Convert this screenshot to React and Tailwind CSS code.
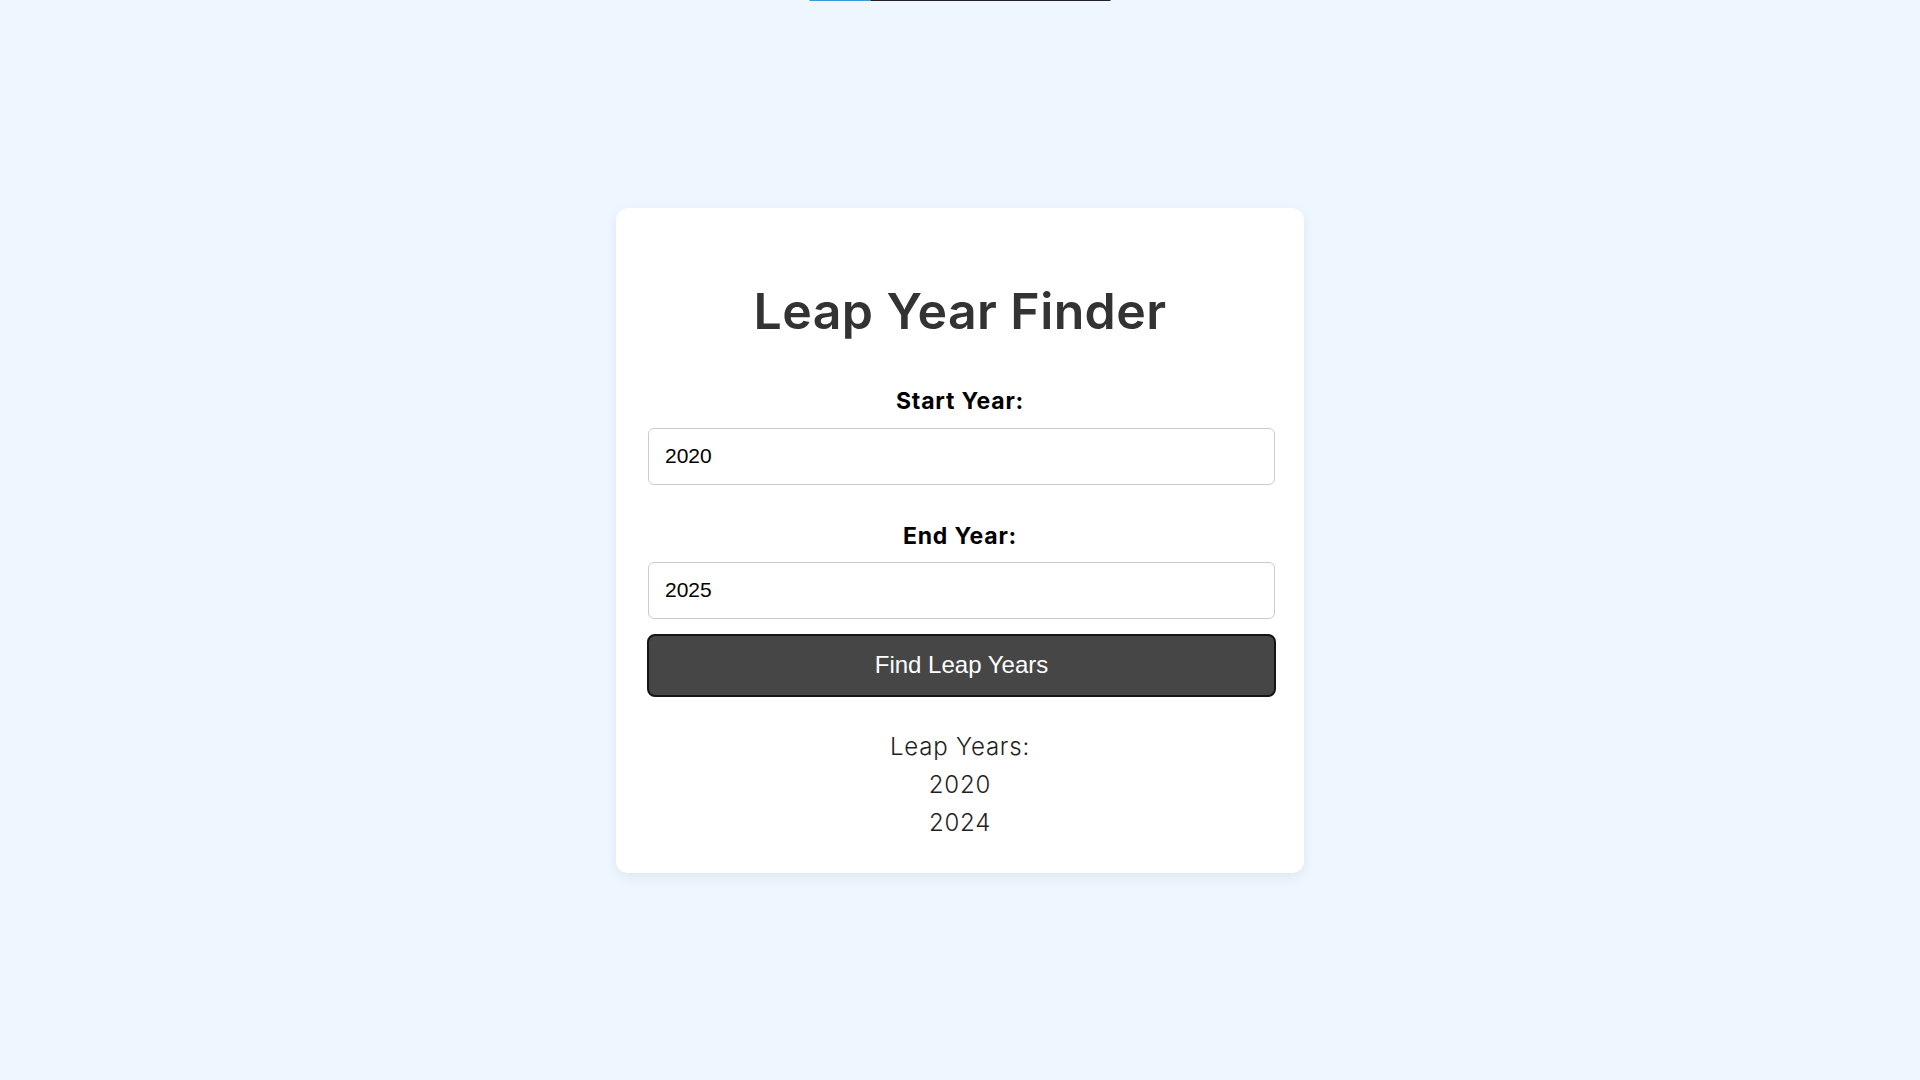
export default function App() {
  return (
    <div className="relative min-h-screen w-full bg-[#eef6ff] flex items-center justify-center" style={{ fontFamily: "Inter, 'Noto Sans', sans-serif" }}>
      <div className="absolute top-0 left-1/2 -translate-x-1/2 w-[301px] h-px flex">
        <div className="w-[61px] h-full bg-[#3a9ad9]"></div>
        <div className="flex-1 h-full bg-[#20242a]"></div>
      </div>

      <div className="w-[688px] bg-white rounded-xl shadow-[0_4px_14px_rgba(0,0,0,0.07)] pt-[74px] pb-[31px] flex flex-col items-center">
        <h1 className="text-[50px] leading-[58px] font-semibold text-[#333333] tracking-[0.4px]">Leap Year Finder</h1>

        <label className="mt-[47px] mb-[13px] text-[23px] leading-[28px] font-bold text-black tracking-[0.8px]">Start Year:</label>
        <input
          type="number"
          defaultValue="2020"
          className="self-start ml-[32px] w-[627px] h-[57px] border border-[#cccccc] rounded-md pl-4 text-[21px] text-black bg-white outline-none"
          style={{ fontFamily: "'Liberation Sans', Arial, sans-serif" }}
        />

        <label className="mt-[37px] mb-[12px] text-[23px] leading-[28px] font-bold text-black tracking-[0.8px]">End Year:</label>
        <input
          type="number"
          defaultValue="2025"
          className="self-start ml-[32px] w-[627px] h-[57px] border border-[#cccccc] rounded-md pl-4 text-[21px] text-black bg-white outline-none"
          style={{ fontFamily: "'Liberation Sans', Arial, sans-serif" }}
        />

        <button
          className="self-start ml-[31px] mt-[15px] w-[629px] h-[63px] bg-[#464646] border-2 border-[#151515] rounded-lg text-white text-[24px]"
          style={{ fontFamily: "'Liberation Sans', Arial, sans-serif" }}
        >
          Find Leap Years
        </button>

        <div className="mt-[31px] flex flex-col items-center text-[24px] leading-[38px] font-light text-[#1f1f1f] tracking-[0.8px]">
          <div>Leap Years:</div>
          <div>2020</div>
          <div>2024</div>
        </div>
      </div>
    </div>
  );
}
